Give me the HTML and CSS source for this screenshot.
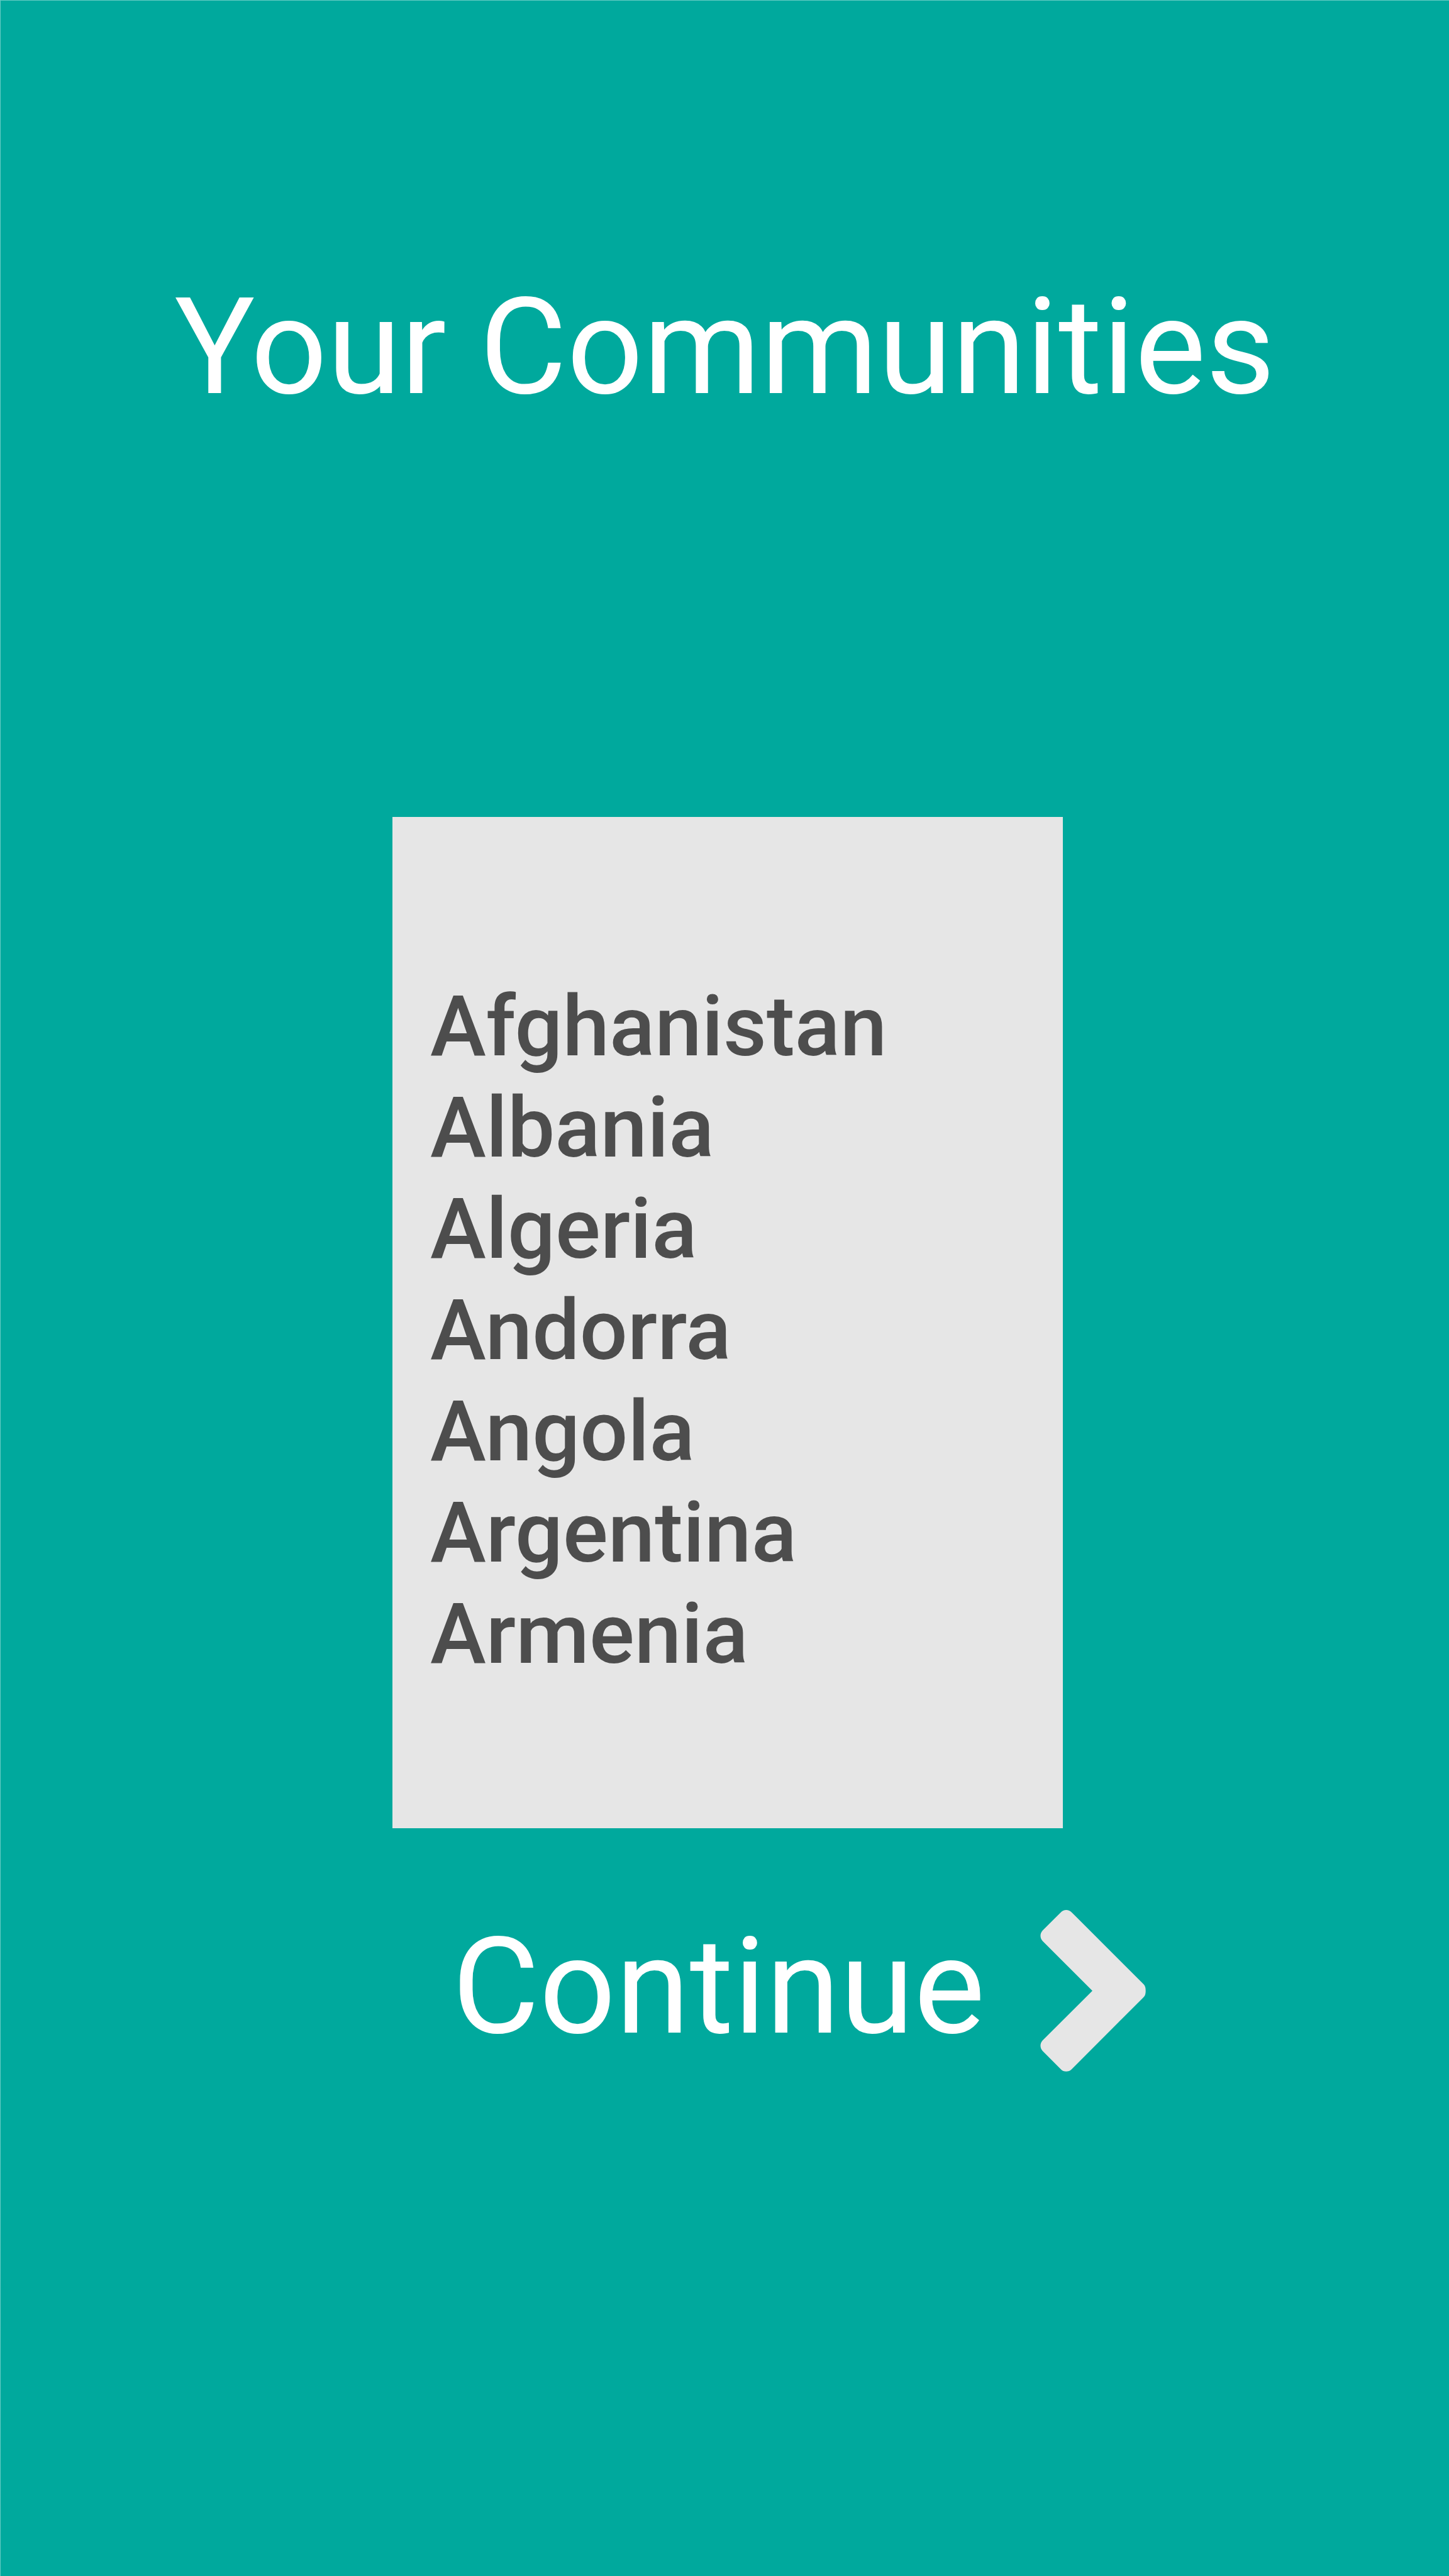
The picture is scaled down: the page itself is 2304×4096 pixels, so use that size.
FILE: index.html
```
<!DOCTYPE html>
<html lang="en">
<head>
<meta charset="utf-8">
<meta name="viewport" content="width=device-width, initial-scale=1">
<title>Your Communities</title>
<link rel="stylesheet" href="styles.css">
</head>
<body>
<main class="page">
  <h1 class="title">Your Communities</h1>
  <section class="card" aria-label="Communities">
    <ul class="list">
      <li>Afghanistan</li>
      <li>Albania</li>
      <li>Algeria</li>
      <li>Andorra</li>
      <li>Angola</li>
      <li>Argentina</li>
      <li>Armenia</li>
    </ul>
  </section>
  <div class="actions">
    <button class="continue" type="button">
      <span>Continue</span>
      <svg class="chevron" viewBox="161 151 656 1020" aria-hidden="true">
        <path d="M288 178C306 158 338 158 357 178L801 622C812 633 816 643 816 664.500C816 686 812 696 801 707L357 1151C338 1171 306 1171 288 1151L176 1039C158 1020 158 992 176 973L485 664.500L176 356C158 337 158 309 176 290Z"/>
      </svg>
    </button>
  </div>
</main>
</body>
</html>
```
FILE: styles.css
```
* {
  box-sizing: border-box;
}

body {
  margin: 0;
  background: #00a99d;
  color: #fff;
  font-family: Roboto, "Liberation Sans", sans-serif;
}

.page {
  display: flex;
  flex-direction: column;
  align-items: center;
  min-height: 100vh;
  padding-top: 426px;
  border-top: 1px solid #66cbc4;
  border-left: 1px solid #66cbc4;
}

.title {
  margin: 0;
  font-size: 213px;
  font-weight: 400;
  line-height: 250px;
  white-space: nowrap;
}

.card {
  width: 1066px;
  max-width: 100%;
  margin: 622px 0 0 9px;
  padding: 253px 60px 228px;
  background: #e6e6e6;
  color: #4d4d4d;
}

.list {
  margin: 0;
  padding: 0;
  list-style: none;
  font-size: 134px;
  font-weight: 500;
  line-height: 161px;
}

.actions {
  margin-top: 127px;
  padding-left: 236px;
}

.continue {
  display: flex;
  align-items: flex-start;
  gap: 88px;
  padding: 0;
  border: 0;
  background: none;
  color: inherit;
  font: inherit;
  font-size: 213px;
  line-height: 250px;
  cursor: pointer;
}

.chevron {
  flex: none;
  width: 168px;
  height: 261px;
  fill: #e6e6e6;
}
```
